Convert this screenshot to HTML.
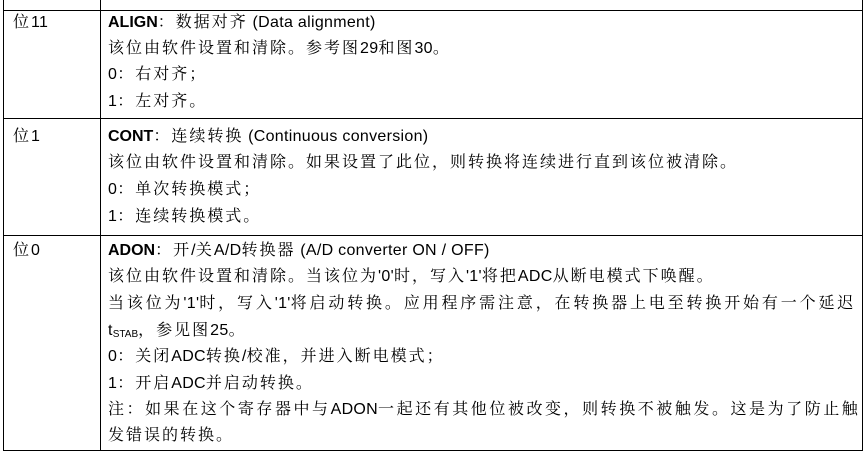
<!DOCTYPE html>
<html><head><meta charset="utf-8"><style>
body{margin:0;width:867px;height:453px;background:#fff;overflow:hidden;position:relative;font-family:"Liberation Sans","Noto Serif CJK SC",serif;font-size:16px;color:#000}
.l{position:absolute;white-space:nowrap;line-height:18px;letter-spacing:2px}
.e{letter-spacing:0.3px}
.b{font-weight:bold;font-family:"Liberation Sans",sans-serif;letter-spacing:0}
.h{position:absolute;height:1px;background:#000}
.v{position:absolute;width:1px;background:#000}
sub{font-size:10px;vertical-align:-2px;letter-spacing:0}
</style></head><body>
<div class="v" style="left:3px;top:0;height:451px"></div>
<div class="v" style="left:100px;top:0;height:451px"></div>
<div class="v" style="left:862px;top:0;height:451px"></div>
<div class="h" style="left:3px;top:10px;width:860px"></div>
<div class="h" style="left:3px;top:118px;width:860px"></div>
<div class="h" style="left:3px;top:235px;width:860px"></div>
<div class="h" style="left:3px;top:450px;width:860px"></div>

<div class="l" style="left:13px;top:14px">位<span class="e">11</span></div>
<div class="l" style="left:108px;top:14px"><span class="b">ALIGN</span>：数据对齐<span class="e"> (Data alignment)</span></div>
<div class="l" style="left:108px;top:40px">该位由软件设置和清除。参考图<span class="e">29</span>和图<span class="e">30</span>。</div>
<div class="l" style="left:108px;top:66px"><span class="e">0</span>：右对齐；</div>
<div class="l" style="left:108px;top:93px"><span class="e">1</span>：左对齐。</div>

<div class="l" style="left:13px;top:128px">位<span class="e">1</span></div>
<div class="l" style="left:108px;top:128px"><span class="b">CONT</span>：连续转换<span class="e"> (Continuous conversion)</span></div>
<div class="l" style="left:108px;top:154px">该位由软件设置和清除。如果设置了此位，则转换将连续进行直到该位被清除。</div>
<div class="l" style="left:108px;top:181px"><span class="e">0</span>：单次转换模式；</div>
<div class="l" style="left:108px;top:208px"><span class="e">1</span>：连续转换模式。</div>

<div class="l" style="left:13px;top:242px">位<span class="e">0</span></div>
<div class="l" style="left:108px;top:242px"><span class="b">ADON</span>：开<span class="e">/</span>关<span class="e">A/D</span>转换器<span class="e"> (A/D converter ON / OFF)</span></div>
<div class="l" style="left:108px;top:268px">该位由软件设置和清除。当该位为<span class="e">'0'</span>时，写入<span class="e">'1'</span>将把<span class="e">ADC</span>从断电模式下唤醒。</div>
<div class="l" style="left:108px;top:295px;letter-spacing:2.85px">当该位为<span class="e">'1'</span>时，写入<span class="e">'1'</span>将启动转换。应用程序需注意，在转换器上电至转换开始有一个延迟</div>
<div class="l" style="left:108px;top:322px"><span class="e">t</span><sub>STAB</sub>，参见图<span class="e">25</span>。</div>
<div class="l" style="left:108px;top:348px"><span class="e">0</span>：关闭<span class="e">ADC</span>转换<span class="e">/</span>校准，并进入断电模式；</div>
<div class="l" style="left:108px;top:375px"><span class="e">1</span>：开启<span class="e">ADC</span>并启动转换。</div>
<div class="l" style="left:108px;top:401px;letter-spacing:2.55px">注：如果在这个寄存器中与<span class="e">ADON</span>一起还有其他位被改变，则转换不被触发。这是为了防止触</div>
<div class="l" style="left:108px;top:427px">发错误的转换。</div>
</body></html>
